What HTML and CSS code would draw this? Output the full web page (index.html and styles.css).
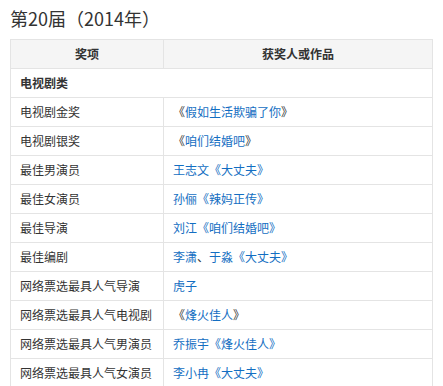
FILE: index.html
```html
<!DOCTYPE html>
<html lang="zh">
<head>
<meta charset="utf-8">
<link rel="stylesheet" href="styles.css">
</head>
<body>
<h3 class="title">第20届（2014年）</h3>
<table class="awards">
  <colgroup><col class="c1"><col class="c2"></colgroup>
  <thead>
    <tr><th>奖项</th><th>获奖人或作品</th></tr>
  </thead>
  <tbody>
    <tr><td class="cat" colspan="2">电视剧类</td></tr>
    <tr><td>电视剧金奖</td><td>《<a>假如生活欺骗了你</a>》</td></tr>
    <tr><td>电视剧银奖</td><td>《<a>咱们结婚吧</a>》</td></tr>
    <tr><td>最佳男演员</td><td><a>王志文《大丈夫》</a></td></tr>
    <tr><td>最佳女演员</td><td><a>孙俪《辣妈正传》</a></td></tr>
    <tr><td>最佳导演</td><td><a>刘江《咱们结婚吧》</a></td></tr>
    <tr><td>最佳编剧</td><td><a>李潇</a>、<a>于淼《大丈夫》</a></td></tr>
    <tr><td>网络票选最具人气导演</td><td><a>虎子</a></td></tr>
    <tr><td>网络票选最具人气电视剧</td><td>《<a>烽火佳人</a>》</td></tr>
    <tr><td>网络票选最具人气男演员</td><td><a>乔振宇《烽火佳人》</a></td></tr>
    <tr><td>网络票选最具人气女演员</td><td><a>李小冉《大丈夫》</a></td></tr>
  </tbody>
</table>
</body>
</html>
```
FILE: styles.css
```css
html, body {
  margin: 0;
  padding: 0;
  background: #fff;
}
body {
  padding: 0 10px;
  font-family: "Noto Sans CJK SC", "Liberation Sans", sans-serif;
  color: #333;
}
.title {
  margin: 0;
  height: 39px;
  line-height: 36px;
  font-size: 18px;
  font-weight: normal;
  color: #333;
}
.awards {
  width: 423px;
  border-collapse: collapse;
  font-size: 12px;
  table-layout: fixed;
}
.c1 { width: 153px; }
.awards th,
.awards td {
  border: 1px solid #e4e4e4;
  height: 28px;
  padding: 0 9px;
  line-height: 16px;
  text-align: left;
  vertical-align: middle;
}
.awards th {
  background: #f5f5f5;
  text-align: center;
  font-weight: bold;
  color: #333;
}
.awards td.cat {
  font-weight: bold;
}
.awards a {
  color: #136ec2;
  text-decoration: none;
}
```
